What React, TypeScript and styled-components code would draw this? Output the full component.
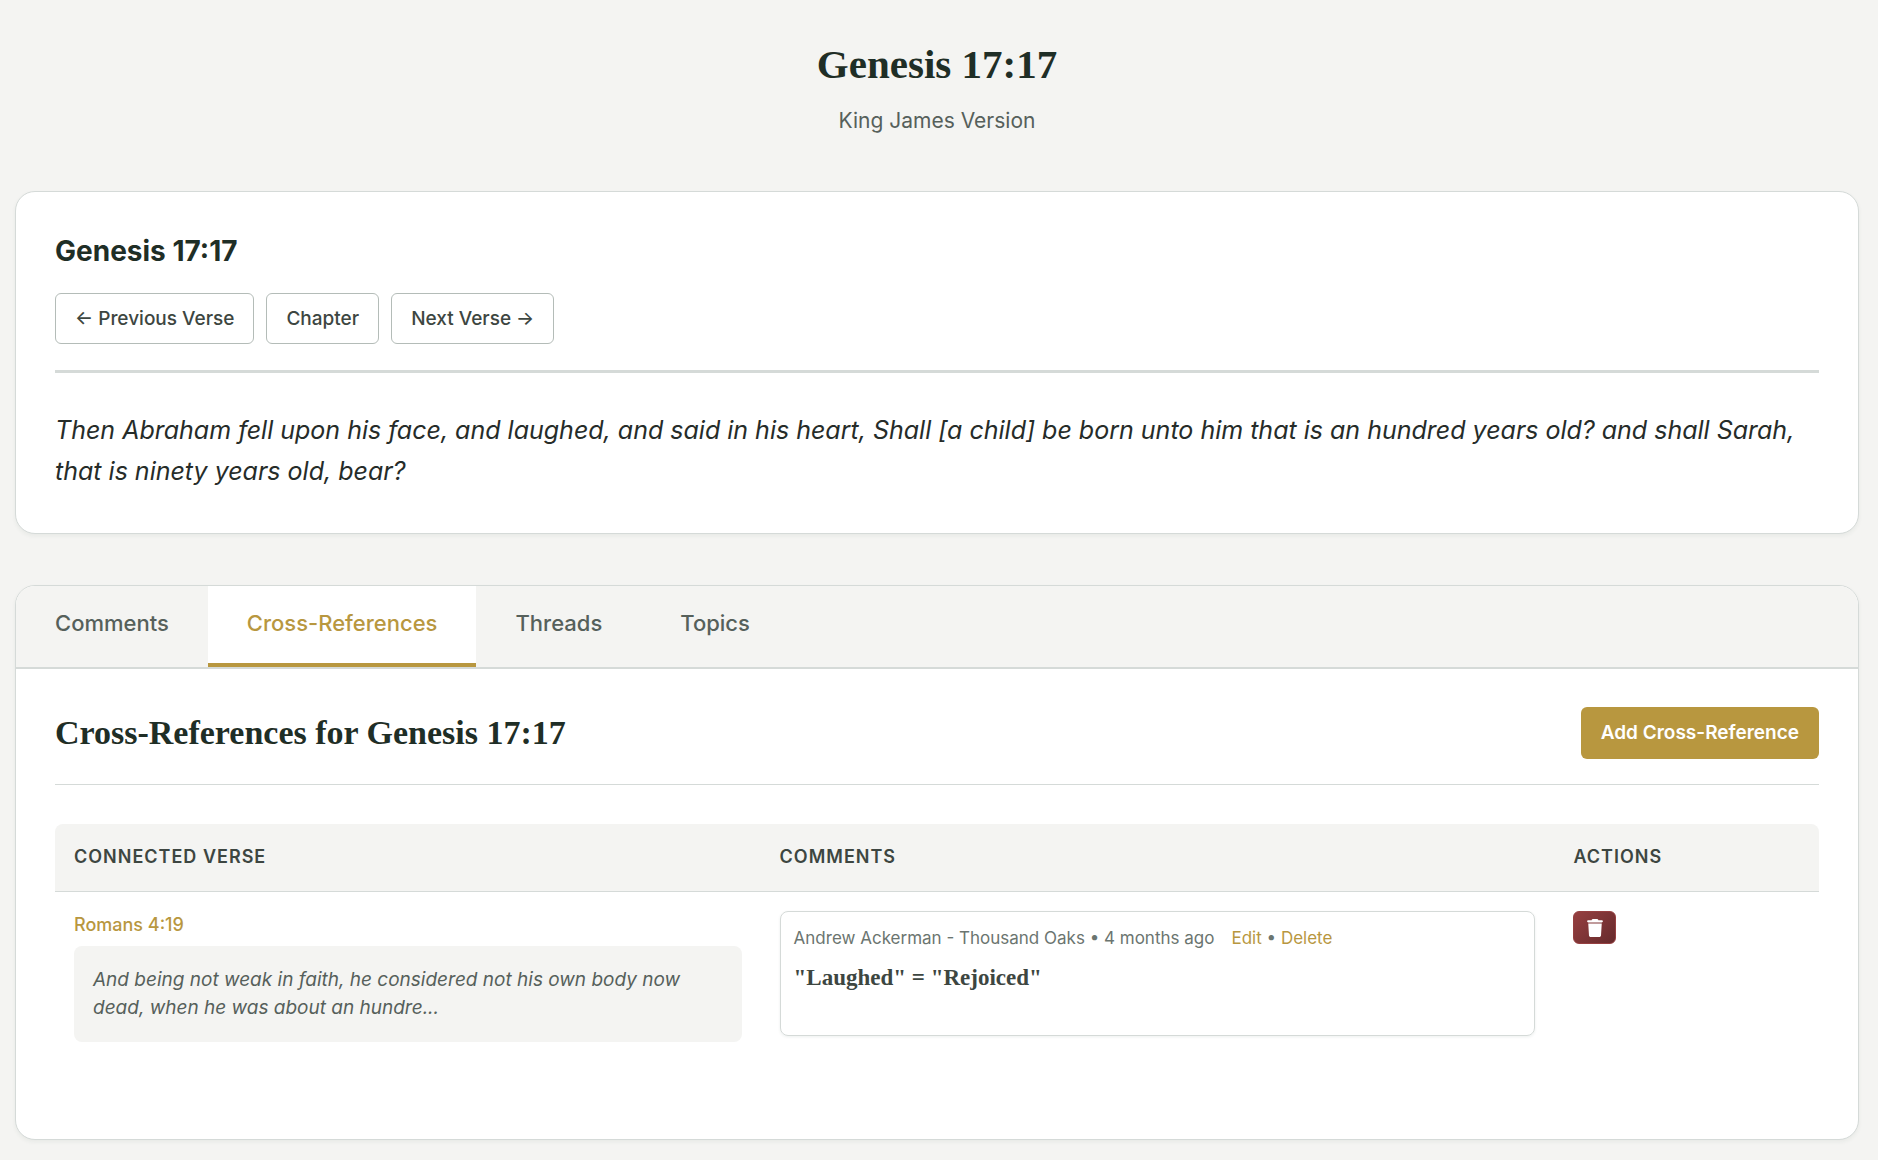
import React, { useState } from "react";
import styled, { createGlobalStyle, css } from "styled-components";
import { FaTrash } from "react-icons/fa6";

const color = {
  page: "#f4f4f2",
  surface: "#ffffff",
  heading: "#1f2e26",
  text: "#262c29",
  strong: "#3d4641",
  muted: "#56605b",
  soft: "#6b7570",
  border: "#d5dad8",
  control: "#b4bcb8",
  gold: "#b8973f",
};

const sans = `Inter, "Open Sans", sans-serif`;
const serif = `"Liberation Serif", serif`;

const GlobalStyle = createGlobalStyle`
  *, *::before, *::after { box-sizing: border-box; }
  body {
    margin: 0;
    background: ${color.page};
    color: ${color.text};
    font-family: ${sans};
  }
  h1, h2, h3, h4, p { margin: 0; }
  button { font-family: inherit; cursor: pointer; }
`;

const Page = styled.main`
  padding: 40px 19px 22px 15px;
`;

const PageHeader = styled.header`
  margin-bottom: 52px;
  text-align: center;
`;

const PageTitle = styled.h1`
  font: 700 41px/48px ${serif};
  color: ${color.heading};
`;

const Version = styled.p`
  margin-top: 15px;
  font-size: 21px;
  line-height: 36px;
  color: ${color.muted};
`;

const Card = styled.section`
  border: 1px solid ${color.border};
  border-radius: 20px;
  background: ${color.surface};
  box-shadow: 0 2px 4px rgba(31, 66, 46, 0.06);
  overflow: hidden;
`;

const VerseCard = styled(Card)`
  margin-bottom: 51px;
  padding: 41px 39px;
`;

const VerseHead = styled.div`
  padding-bottom: 26px;
  border-bottom: 3px solid ${color.border};
`;

const VerseTitle = styled.h2`
  font-size: 28px;
  font-weight: 700;
  line-height: 37px;
  color: ${color.heading};
`;

const VerseNav = styled.nav`
  display: flex;
  gap: 12px;
  margin-top: 23px;
`;

const NavLink = styled.a`
  padding: 0 19px;
  border: 1px solid ${color.control};
  border-radius: 6px;
  font-size: 19px;
  font-weight: 500;
  line-height: 49px;
  color: ${color.strong};
  text-decoration: none;
`;

const VerseText = styled.p`
  margin-top: 37px;
  font-size: 25px;
  font-style: italic;
  line-height: 41px;
`;

const TabList = styled.div`
  display: flex;
  border-bottom: 2px solid ${color.border};
  background: ${color.page};
`;

const Tab = styled.button<{ $active: boolean }>`
  height: 81px;
  padding: 0 39px 4px;
  border: 0;
  border-bottom: 4px solid transparent;
  background: transparent;
  font-size: 22px;
  font-weight: 500;
  color: ${color.muted};
  ${(p) =>
    p.$active &&
    css`
      border-bottom-color: ${color.gold};
      background: ${color.surface};
      color: ${color.gold};
    `}
`;

const Panel = styled.div`
  padding: 38px 39px 78px;
`;

const PanelHead = styled.div`
  display: flex;
  align-items: center;
  justify-content: space-between;
  padding-bottom: 25px;
  margin-bottom: 39px;
  border-bottom: 1px solid ${color.border};
`;

const PanelTitle = styled.h2`
  font: 700 34px/40px ${serif};
  color: ${color.heading};
`;

const AddButton = styled.button`
  height: 52px;
  padding: 0 20px 2px;
  border: 0;
  border-radius: 6px;
  background: ${color.gold};
  font-size: 19px;
  font-weight: 600;
  color: #ffffff;
`;

const Table = styled.table`
  width: 100%;
  table-layout: fixed;
  border-collapse: separate;
  border-spacing: 0;
`;

const HeadCell = styled.th<{ $width: string }>`
  width: ${(p) => p.$width};
  padding: 18px 19px 20px;
  border-bottom: 1px solid ${color.border};
  background: ${color.page};
  font-size: 18px;
  font-weight: 600;
  line-height: 29px;
  letter-spacing: 1px;
  text-align: left;
  text-transform: uppercase;
  color: ${color.strong};
  &:first-child { border-top-left-radius: 8px; }
  &:last-child { border-top-right-radius: 8px; }
`;

const Cell = styled.td`
  padding: 19px;
  vertical-align: top;
`;

const VerseLink = styled.a`
  display: inline-block;
  font-size: 18px;
  font-weight: 500;
  line-height: 28px;
  color: ${color.gold};
  text-decoration: none;
`;

const Excerpt = styled.p`
  margin-top: 7px;
  padding: 20px 19px;
  border-radius: 8px;
  background: ${color.page};
  font-size: 19px;
  font-style: italic;
  line-height: 28px;
  color: ${color.muted};
`;

const Comment = styled.article`
  min-height: 125px;
  padding: 12px 13px;
  border: 1px solid ${color.border};
  border-radius: 8px;
  box-shadow: 0 1px 3px rgba(31, 66, 46, 0.08);
`;

const Meta = styled.p`
  font-size: 17px;
  line-height: 28px;
  color: ${color.soft};
`;

const MetaLinks = styled.span`
  margin-left: 17px;
`;

const MetaLink = styled.a`
  color: ${color.gold};
  text-decoration: none;
`;

const CommentTitle = styled.h3`
  margin-top: 12px;
  font: 700 23px/28px ${serif};
  color: ${color.strong};
`;

const DeleteButton = styled.button`
  display: flex;
  align-items: center;
  justify-content: center;
  width: 43px;
  height: 33px;
  padding: 0;
  border: 1px solid #963f40;
  border-radius: 6px;
  background: linear-gradient(135deg, #963f40, #662a2c);
  color: #ffffff;
`;

const tabs = ["Comments", "Cross-References", "Threads", "Topics"];

export default function App() {
  const [active, setActive] = useState("Cross-References");
  return (
    <>
      <GlobalStyle />
      <Page>
        <PageHeader>
          <PageTitle>Genesis 17:17</PageTitle>
          <Version>King James Version</Version>
        </PageHeader>

        <VerseCard>
          <VerseHead>
            <VerseTitle>Genesis 17:17</VerseTitle>
            <VerseNav>
              <NavLink href="#previous">← Previous Verse</NavLink>
              <NavLink href="#chapter">Chapter</NavLink>
              <NavLink href="#next">Next Verse →</NavLink>
            </VerseNav>
          </VerseHead>
          <VerseText>
            Then Abraham fell upon his face, and laughed, and said in his heart, Shall [a child] be
            born unto him that is an hundred years old? and shall Sarah, that is ninety years old,
            bear?
          </VerseText>
        </VerseCard>

        <Card>
          <TabList role="tablist">
            {tabs.map((tab) => (
              <Tab
                key={tab}
                type="button"
                role="tab"
                aria-selected={tab === active}
                $active={tab === active}
                onClick={() => setActive(tab)}
              >
                {tab}
              </Tab>
            ))}
          </TabList>
          <Panel role="tabpanel">
            <PanelHead>
              <PanelTitle>Cross-References for Genesis 17:17</PanelTitle>
              <AddButton type="button">Add Cross-Reference</AddButton>
            </PanelHead>
            <Table>
              <thead>
                <tr>
                  <HeadCell $width="40%">Connected Verse</HeadCell>
                  <HeadCell $width="45%">Comments</HeadCell>
                  <HeadCell $width="15%">Actions</HeadCell>
                </tr>
              </thead>
              <tbody>
                <tr>
                  <Cell>
                    <VerseLink href="#romans-4-19">Romans 4:19</VerseLink>
                    <Excerpt>
                      And being not weak in faith, he considered not his own body now dead, when he
                      was about an hundre...
                    </Excerpt>
                  </Cell>
                  <Cell>
                    <Comment>
                      <Meta>
                        Andrew Ackerman - Thousand Oaks • 4 months ago
                        <MetaLinks>
                          <MetaLink href="#edit">Edit</MetaLink> •{" "}
                          <MetaLink href="#delete">Delete</MetaLink>
                        </MetaLinks>
                      </Meta>
                      <CommentTitle>"Laughed" = "Rejoiced"</CommentTitle>
                    </Comment>
                  </Cell>
                  <Cell>
                    <DeleteButton type="button" aria-label="Delete cross-reference">
                      <FaTrash size={18} />
                    </DeleteButton>
                  </Cell>
                </tr>
              </tbody>
            </Table>
          </Panel>
        </Card>
      </Page>
    </>
  );
}
